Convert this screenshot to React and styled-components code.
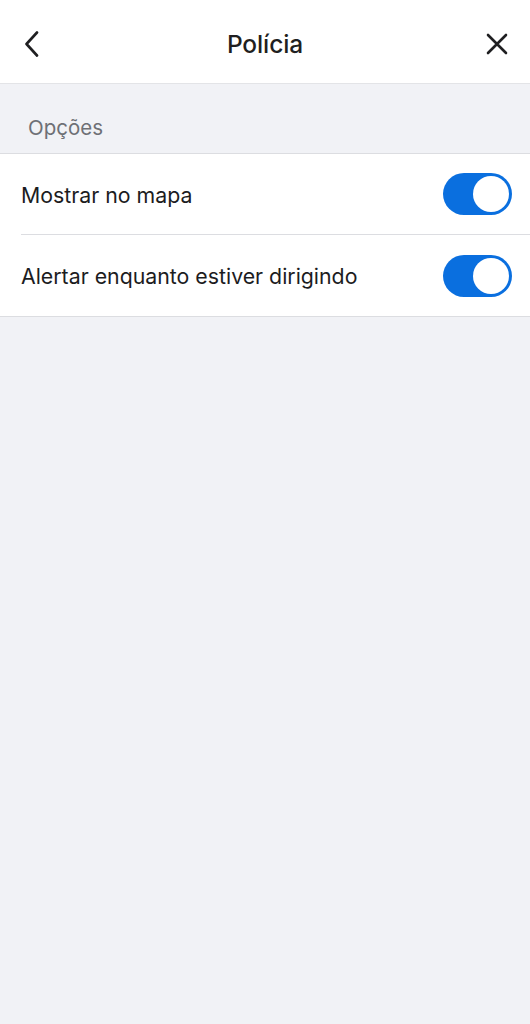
import React from "react";
import styled, { createGlobalStyle } from "styled-components";

const Global = createGlobalStyle`
  html, body { margin: 0; padding: 0; background: #f1f2f6; }
  body { font-family: Inter, "Noto Sans", "Liberation Sans", sans-serif; -webkit-font-smoothing: antialiased; }
  * { box-sizing: border-box; }
`;

const Page = styled.div`
  min-height: 1024px;
  background: #f1f2f6;
  display: flex;
  flex-direction: column;
`;

const Header = styled.header`
  height: 84px;
  background: #ffffff;
  border-bottom: 1px solid #e3e4e7;
  display: grid;
  grid-template-columns: 64px 1fr 64px;
  align-items: center;
  padding-top: 5px;
`;

const IconButton = styled.button`
  border: 0;
  background: none;
  padding: 0;
  display: flex;
  align-items: center;
  justify-content: ${(p) => (p.$end ? "flex-end" : "flex-start")};
  padding-left: ${(p) => (p.$end ? "0" : "24px")};
  padding-right: ${(p) => (p.$end ? "22px" : "0")};
  color: #1f1f21;
`;

const Title = styled.h1`
  margin: 0;
  text-align: center;
  font-size: 24.5px;
  font-weight: 500;
  color: #1f1f21;
  letter-spacing: -0.1px;
`;

const SectionLabel = styled.div`
  height: 70px;
  padding: 31px 28px 0;
  font-size: 20.5px;
  color: #6e7075;
  border-bottom: 1px solid #dcdde1;
`;

const List = styled.div`
  background: #ffffff;
  border-bottom: 1px solid #dcdde1;
`;

const Row = styled.div`
  height: 81px;
  margin-left: 21px;
  padding-right: 18px;
  display: flex;
  align-items: center;
  justify-content: space-between;
  border-bottom: ${(p) => (p.$last ? "0" : "1px solid #dcdde1")};
`;

const RowLabel = styled.span`
  font-size: 21.3px;
  color: #1c1c1e;
  padding-top: 1px;
`;

const Track = styled.div`
  width: 69px;
  height: 42px;
  border-radius: 21px;
  background: ${(p) => (p.$on ? "#0a6fdf" : "#d0d2d6")};
  padding: 3px;
  display: flex;
  justify-content: ${(p) => (p.$on ? "flex-end" : "flex-start")};
`;

const Knob = styled.div`
  width: 36px;
  height: 36px;
  border-radius: 50%;
  background: #ffffff;
`;

const Toggle = ({ on }) => (
  <Track $on={on}>
    <Knob />
  </Track>
);

export default function App() {
  return (
    <Page>
      <Global />
      <Header>
        <IconButton aria-label="Voltar">
          <svg width="16" height="26" viewBox="0 0 16 26" fill="none">
            <path d="M13 1.5L2.5 13L13 24.5" stroke="#1f1f21" strokeWidth="2.6" strokeLinecap="round" strokeLinejoin="round" />
          </svg>
        </IconButton>
        <Title>Polícia</Title>
        <IconButton $end aria-label="Fechar">
          <svg width="22" height="22" viewBox="0 0 22 22" fill="none">
            <path d="M2 2L20 20M20 2L2 20" stroke="#1f1f21" strokeWidth="2.6" strokeLinecap="round" />
          </svg>
        </IconButton>
      </Header>
      <SectionLabel>Opções</SectionLabel>
      <List>
        <Row>
          <RowLabel>Mostrar no mapa</RowLabel>
          <Toggle on />
        </Row>
        <Row $last>
          <RowLabel>Alertar enquanto estiver dirigindo</RowLabel>
          <Toggle on />
        </Row>
      </List>
    </Page>
  );
}
